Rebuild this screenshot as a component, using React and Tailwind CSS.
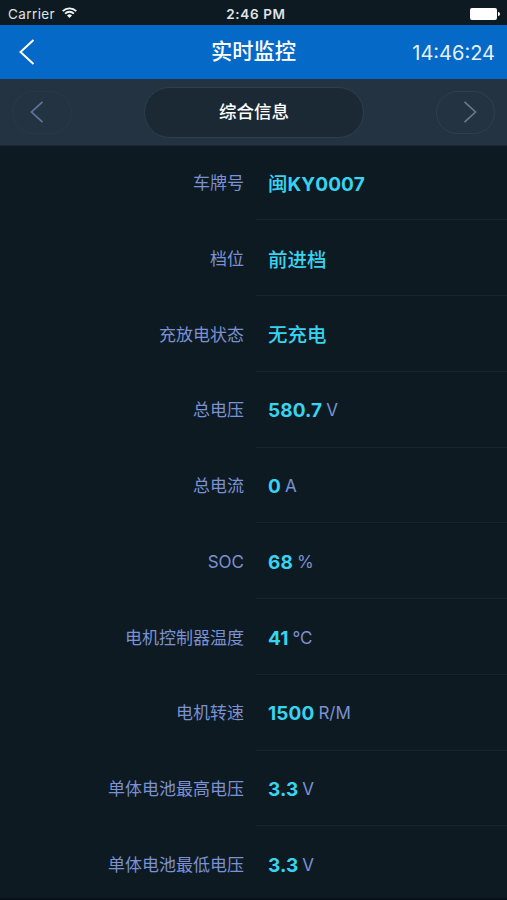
const rows = [
  { label: "车牌号", prefix: "闽", value: "KY0007" },
  { label: "档位", prefix: "前进档" },
  { label: "充放电状态", prefix: "无充电" },
  { label: "总电压", value: "580.7", unit: "V" },
  { label: "总电流", value: "0", unit: "A" },
  { label: "SOC", value: "68", unit: "%" },
  { label: "电机控制器温度", value: "41", unit: "°C" },
  { label: "电机转速", value: "1500", unit: "R/M" },
  { label: "单体电池最高电压", value: "3.3", unit: "V" },
  { label: "单体电池最低电压", value: "3.3", unit: "V" },
];

const Chevron = ({ points, className, strokeWidth }) => (
  <svg className={className} viewBox="0 0 16 26" fill="none" stroke="currentColor" strokeWidth={strokeWidth}>
    <polyline points={points} />
  </svg>
);

const StatusBar = () => {
  return (
    <div className="grid h-[25px] grid-cols-[1fr_auto_1fr] items-center pt-[3px] pl-2 pr-[7px] text-[#dfe3e6]">
      <div className="flex items-center gap-[7px]">
        <span className="text-[13.5px] tracking-[0.4px]">Carrier</span>
        <svg className="-mt-[3px] h-[11px] w-[15px]" viewBox="0 0 15 11" fill="none" stroke="#f2f4f5" strokeWidth="1.8">
          <path d="M0.7 4.1a9.6 9.6 0 0 1 13.6 0" />
          <path d="M3.1 6.6a6.2 6.2 0 0 1 8.8 0" />
          <path d="M7.5 11L5 8.5a3.6 3.6 0 0 1 5 0z" fill="#f2f4f5" stroke="none" />
        </svg>
      </div>
      <div className="pl-1 text-center text-[13.5px] tracking-[0.65px] font-semibold whitespace-nowrap">2:46 PM</div>
      <div className="flex items-center justify-end gap-px">
        <div className="h-3 w-[27px] rounded-[2px] bg-white"></div>
        <div className="h-1 w-[2px] rounded-r-full bg-white"></div>
      </div>
    </div>
  );
};

const Header = () => {
  return (
    <div className="grid h-[54px] grid-cols-[1fr_auto_1fr] items-center bg-[#0569c8] pl-[19px] pr-3 text-white">
      <button className="w-4">
        <Chevron points="14.5,1 1.5,13 14.5,25" strokeWidth="2" className="h-[26px] w-4" />
      </button>
      <h1 className="pr-[7px] text-center text-[21.3px] leading-none font-medium">实时监控</h1>
      <span className="pt-px text-right text-[20px] leading-none text-[#e4f0fb]">14:46:24</span>
    </div>
  );
};

const Switcher = () => {
  return (
    <div className="flex h-[67px] items-center justify-between border-b border-[#1b2833] bg-[#243341] pl-3 pr-3">
      <button className="flex h-[43px] w-[60px] items-center rounded-full border border-[#293947] pl-[17px] text-[#5c7b9c]">
        <Chevron points="14.5,1 1.5,13 14.5,25" strokeWidth="1.9" className="h-[22px] w-[14px]" />
      </button>
      <div className="flex h-[51px] w-[220px] items-center justify-center rounded-full border border-[#2c3f4c] bg-[#1b2935] text-[17.5px] font-medium text-white">
        综合信息
      </div>
      <button className="flex h-[43px] w-[59px] items-center justify-end rounded-full border border-[#2e404e] pr-[17px] text-[#677b8c]">
        <Chevron points="1.5,1 14.5,13 1.5,25" strokeWidth="1.9" className="h-[22px] w-[14px]" />
      </button>
    </div>
  );
};

const Row = ({ label, prefix, value, unit }) => {
  return (
    <div className="flex h-[75.75px] shrink-0">
      <div className="flex w-[256px] items-center justify-end pt-[3px] pr-3 text-[17px] text-[#7b91d1]">{label}</div>
      <div className="flex flex-1 items-center border-b border-[#17242d] pt-[5px] pl-3">
        <div className="flex items-baseline text-[19px] text-[#38d3f0]">
          {prefix && <span className="text-[19.5px] font-medium">{prefix}</span>}
          {value && <span className="font-bold tracking-[0.1px]">{value}</span>}
          {unit && <span className="relative -top-px ml-1 text-[17px] text-[#7b91d1]">{unit}</span>}
        </div>
      </div>
    </div>
  );
};

const App = () => {
  return (
    <div className="flex h-[900px] w-[507px] flex-col overflow-hidden bg-[#0d1a22] font-['Inter','Noto_Sans_CJK_SC',sans-serif]">
      <StatusBar />
      <Header />
      <Switcher />
      <div className="flex h-[752px] flex-col overflow-hidden">
        <div className="-mt-[1.5px] flex flex-col">
          {rows.map((row) => (
            <Row key={row.label} {...row} />
          ))}
        </div>
      </div>
      <div className="h-0.5 bg-[#08111a]"></div>
    </div>
  );
};

export default App;
